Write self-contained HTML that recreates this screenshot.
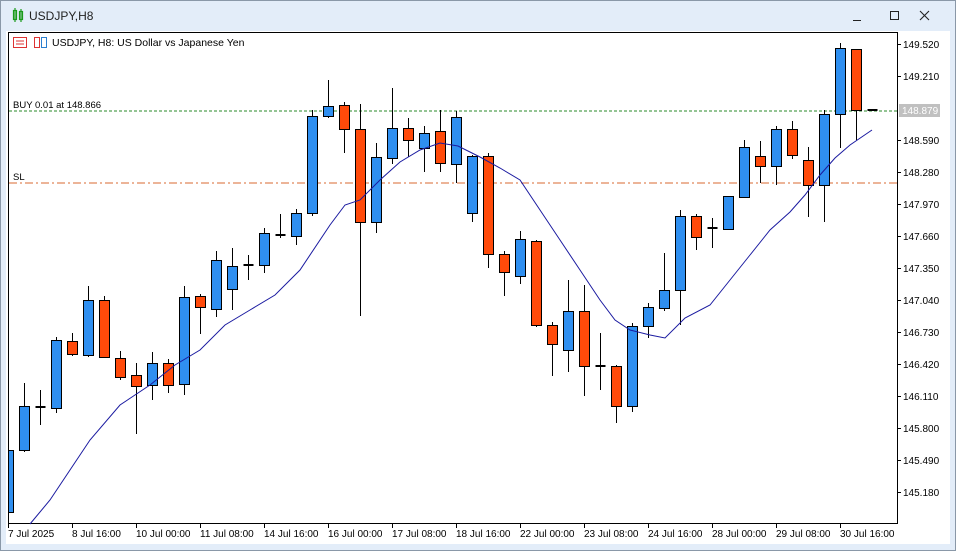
<!DOCTYPE html>
<html><head><meta charset="utf-8"><style>
html,body{margin:0;padding:0;width:956px;height:551px;overflow:hidden;background:#dde9f7;font-family:"Liberation Sans",sans-serif;}
#win{position:absolute;left:0;top:0;width:954px;height:549px;border:1px solid #8a98a8;background:#e3edf9;}
svg{position:absolute;left:0;top:0}
</style></head><body>
<div id="win"></div>
<svg id="s" width="956" height="551" xmlns="http://www.w3.org/2000/svg" font-family="Liberation Sans, sans-serif">
<rect x="6" y="31" width="944" height="513" fill="#fff"/>
<!-- title icon -->
<g stroke="#1a9a1a" fill="none" stroke-width="1.2">
<rect x="13.5" y="10.5" width="3" height="9"/><line x1="15" y1="8" x2="15" y2="22"/>
<rect x="19.5" y="11.5" width="3" height="8"/><line x1="21" y1="9" x2="21" y2="22"/>
</g>
<text x="29" y="20" font-size="12" fill="#222">USDJPY,H8</text>
<line x1="853" y1="20.5" x2="861" y2="20.5" stroke="#222"/>
<rect x="890.5" y="11.5" width="8" height="8" fill="none" stroke="#222"/>
<path d="M920 11 L929 20 M929 11 L920 20" stroke="#222" stroke-width="1.1"/>
<!-- chart frame -->
<rect x="8.5" y="32.5" width="889" height="491" fill="#fff" stroke="#000"/>
<g stroke="#d33" fill="none"><rect x="13.5" y="37.5" width="13" height="10"/><line x1="16" y1="41" x2="24" y2="41"/><line x1="16" y1="44" x2="24" y2="44"/></g>
<g fill="none"><rect x="34.5" y="37.5" width="5" height="10" stroke="#d33"/><rect x="41.5" y="37.5" width="5" height="10" stroke="#2a7fd0"/></g>
<text x="52" y="46" font-size="10.5" fill="#000">USDJPY, H8:  US Dollar vs Japanese Yen</text>
<line x1="9" y1="111" x2="897" y2="111" stroke="#2a8a2a" stroke-dasharray="3,2"/>
<text x="13" y="108" font-size="9.5" fill="#000">BUY 0.01 at 148.866</text>
<line x1="9" y1="183" x2="897" y2="183" stroke="#d86a30" stroke-dasharray="8,3,2,3"/>
<text x="13" y="180" font-size="9.5" fill="#000">SL</text>
<g id="c"></g>
<polyline fill="none" stroke="#1a1aa0" stroke-width="1" points="30,524 50,500 72,467 90,440 120,405 150,385 175,365 200,350 225,325 250,310 275,295 300,270 330,225 345,205 360,200 380,180 400,162 420,150 440,143 458,146 480,157 500,168 520,180 540,210 560,240 580,270 600,300 615,320 630,330 650,335 665,338 685,318 710,305 730,280 750,255 770,230 790,212 805,195 820,175 835,158 850,145 872,130"/>
<g id="ax" font-size="10" fill="#000">
<text x="903" y="48">149.520</text><text x="903" y="80">149.210</text>
<rect x="899" y="104" width="41" height="13" fill="#c0c0c0"/><text x="902" y="114" fill="#fff">148.879</text>
<text x="903" y="144">148.590</text><text x="903" y="176">148.280</text>
<text x="903" y="208">147.970</text><text x="903" y="240">147.660</text><text x="903" y="272">147.350</text>
<text x="903" y="304">147.040</text><text x="903" y="336">146.730</text><text x="903" y="368">146.420</text>
<text x="903" y="400">146.110</text><text x="903" y="432">145.800</text><text x="903" y="464">145.490</text>
<text x="903" y="496">145.180</text>
<text x="8" y="537">7 Jul 2025</text><text x="72" y="537">8 Jul 16:00</text><text x="136" y="537">10 Jul 00:00</text>
<text x="200" y="537">11 Jul 08:00</text><text x="264" y="537">14 Jul 16:00</text><text x="328" y="537">16 Jul 00:00</text>
<text x="392" y="537">17 Jul 08:00</text><text x="456" y="537">18 Jul 16:00</text><text x="520" y="537">22 Jul 00:00</text>
<text x="584" y="537">23 Jul 08:00</text><text x="648" y="537">24 Jul 16:00</text><text x="712" y="537">28 Jul 00:00</text>
<text x="776" y="537">29 Jul 08:00</text><text x="840" y="537">30 Jul 16:00</text>
</g>
<g id="t" stroke="#000"></g>
</svg>
<script>
var d=[[10,'b',450,512,450,512],[24,'b',406,450,383,452],[40,'d',407,407,390,425],[56,'b',340,408,337,413],[72,'r',341,354,333,356],[88,'b',300,355,286,357],[104,'r',300,357,296,358],[120,'r',358,377,351,380],[136,'r',375,386,363,434],[152,'b',363,385,352,400],[168,'r',363,385,359,393],[184,'b',297,384,286,395],[200,'r',296,307,294,334],[216,'b',260,309,251,317],[232,'b',266,289,248,310],[248,'d',265,265,255,280],[264,'b',233,265,228,273],[280,'d',235,235,214,238],[296,'b',213,236,209,245],[312,'b',116,213,110,216],[328,'b',106,116,80,118],[344,'r',105,129,102,153],[360,'r',129,222,104,316],[376,'b',157,222,143,233],[392,'b',128,158,88,164],[408,'r',128,140,118,157],[424,'b',133,148,126,172],[440,'r',131,163,110,172],[456,'b',117,164,111,183],[472,'b',156,213,155,222],[488,'r',156,254,153,268],[504,'r',254,272,251,296],[520,'b',239,276,231,284],[536,'r',241,325,240,327],[552,'r',325,344,322,376],[568,'b',311,350,280,372],[584,'r',311,366,285,396],[600,'d',366,366,333,390],[616,'r',366,406,365,423],[632,'b',326,406,323,412],[648,'b',307,326,303,338],[664,'b',290,308,253,311],[680,'b',216,290,210,325],[696,'r',216,237,214,250],[712,'d',228,228,218,248],[728,'b',196,229,196,230],[744,'b',147,197,140,197],[760,'r',156,166,141,183],[776,'b',129,166,126,185],[792,'r',129,155,121,159],[808,'r',160,185,147,217],[824,'b',114,185,110,222],[840,'b',48,114,43,148],[856,'r',49,110,110,140],[872,'d',110,110,110,110]];
var h='';
d.forEach(function(c){var x=c[0]+0.5;
h+='<line x1="'+x+'" y1="'+c[4]+'" x2="'+x+'" y2="'+c[5]+'" stroke="#000"/>';
if(c[1]=='d'){h+='<line x1="'+(x-5)+'" y1="'+c[2]+'" x2="'+(x+5)+'" y2="'+c[2]+'" stroke="#000" stroke-width="2"/>';}
else{var w=c[0]<12?5:10;var l=c[0]<12?8.5:x-5;h+='<rect x="'+l+'" y="'+(c[2]+0.5)+'" width="'+w+'" height="'+(c[3]-c[2])+'" fill="'+(c[1]=='b'?'#2f8ff0':'#ff4a0a')+'" stroke="#000"/>';}});
document.getElementById('c').innerHTML=h;
var t='';
[44,76,140,172,204,236,268,300,332,364,396,428,460,492].forEach(function(y){t+='<line x1="897" y1="'+(y+0.5)+'" x2="901" y2="'+(y+0.5)+'"/>';});
for(var x=8;x<=840;x+=64)t+='<line x1="'+(x+0.5)+'" y1="524" x2="'+(x+0.5)+'" y2="528"/>';
document.getElementById('t').innerHTML=t;
</script>
</body></html>
